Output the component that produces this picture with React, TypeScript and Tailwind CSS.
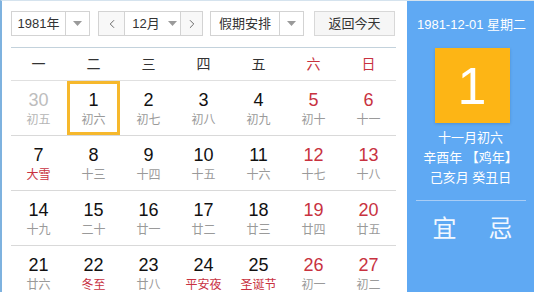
import React from 'react';
import { ChevronLeft, ChevronRight } from 'lucide-react';

type Day = { d: number; l: string; kind?: 'muted' | 'red'; fest?: boolean; sel?: boolean };

const weeks: Day[][] = [
  [
    { d: 30, l: '初五', kind: 'muted' },
    { d: 1, l: '初六', sel: true },
    { d: 2, l: '初七' },
    { d: 3, l: '初八' },
    { d: 4, l: '初九' },
    { d: 5, l: '初十', kind: 'red' },
    { d: 6, l: '十一', kind: 'red' },
  ],
  [
    { d: 7, l: '大雪', fest: true },
    { d: 8, l: '十三' },
    { d: 9, l: '十四' },
    { d: 10, l: '十五' },
    { d: 11, l: '十六' },
    { d: 12, l: '十七', kind: 'red' },
    { d: 13, l: '十八', kind: 'red' },
  ],
  [
    { d: 14, l: '十九' },
    { d: 15, l: '二十' },
    { d: 16, l: '廿一' },
    { d: 17, l: '廿二' },
    { d: 18, l: '廿三' },
    { d: 19, l: '廿四', kind: 'red' },
    { d: 20, l: '廿五', kind: 'red' },
  ],
  [
    { d: 21, l: '廿六' },
    { d: 22, l: '冬至', fest: true },
    { d: 23, l: '廿八' },
    { d: 24, l: '平安夜', fest: true },
    { d: 25, l: '圣诞节', fest: true },
    { d: 26, l: '初一', kind: 'red' },
    { d: 27, l: '初二', kind: 'red' },
  ],
];

const weekdays = ['一', '二', '三', '四', '五', '六', '日'];

const Caret = () => (
  <svg width="9" height="5" viewBox="0 0 9 5">
    <path d="M0 0h9L4.5 5z" fill="#9a9a9a" />
  </svg>
);

const DayCell = ({ day }: { day: Day }) => {
  const numColor =
    day.kind === 'muted' ? 'text-[#bdbdbd]' : day.kind === 'red' ? 'text-[#c8323f]' : 'text-[#111]';
  const lunarColor = day.fest ? 'text-[#c8323f]' : day.kind === 'muted' ? 'text-[#b5b5b5]' : 'text-[#9a9a9a]';
  return (
    <div
      className={`mx-px flex h-[54px] flex-col items-center border-[3px] pt-[5px] ${
        day.sel ? 'border-[#f6b82c]' : 'border-transparent'
      }`}
    >
      <span className={`text-[18px] leading-[22px] ${numColor}`}>{day.d}</span>
      <span className={`mt-px text-[12px] leading-[16px] ${lunarColor}`}>{day.l}</span>
    </div>
  );
};

export default function App() {
  return (
    <div className="flex h-[292px] w-[534px] overflow-hidden border-t border-l-2 border-t-[#d5e3ee] border-l-[#7eb2df] bg-white font-['Liberation_Sans','Noto_Sans_CJK_SC',sans-serif]">
      <div className="w-[405px] shrink-0 pt-[10px] pl-[9px]">
        <div className="flex h-[25px] text-[13px] text-[#333]">
          <div className="flex w-[79px] border border-[#d3d3d3]">
            <span className="flex w-[54px] items-center justify-center border-r border-[#d3d3d3]">1981年</span>
            <span className="flex flex-1 items-center justify-center">
              <Caret />
            </span>
          </div>
          <div className="ml-[8px] flex w-[105px] border border-[#d3d3d3]">
            <span className="flex w-[26px] items-center justify-center border-r border-[#d3d3d3] bg-[#f8f8f8]">
              <ChevronLeft size={14} strokeWidth={1.5} color="#555" />
            </span>
            <span className="flex w-[56px] items-center justify-center gap-[8px] border-r border-[#d3d3d3] pl-[4px]">
              12月
              <Caret />
            </span>
            <span className="flex flex-1 items-center justify-center bg-[#f8f8f8]">
              <ChevronRight size={14} strokeWidth={1.5} color="#555" />
            </span>
          </div>
          <div className="ml-[7px] flex w-[94px] border border-[#d3d3d3]">
            <span className="flex w-[69px] items-center justify-center border-r border-[#d3d3d3]">假期安排</span>
            <span className="flex flex-1 items-center justify-center">
              <Caret />
            </span>
          </div>
          <button className="ml-[10px] flex w-[81px] items-center justify-center border border-[#d8d8d8] bg-[#f6f6f6] text-[13px] text-[#333]">
            返回今天
          </button>
        </div>

        <div className="mt-[11px] w-[385px] border-t border-[#c3d2dc]">
          <div className="grid h-[33px] grid-cols-7 border-b border-[#e0e0e0] text-[14px]">
            {weekdays.map((w, i) => (
              <span
                key={w}
                className={`flex items-center justify-center ${i >= 5 ? 'text-[#c8323f]' : 'text-[#333]'}`}
              >
                {w}
              </span>
            ))}
          </div>
          {weeks.map((week, wi) => (
            <div key={wi} className="grid h-[55px] grid-cols-7 border-b border-[#d9d9d9]">
              {week.map((day) => (
                <DayCell key={`${wi}-${day.d}`} day={day} />
              ))}
            </div>
          ))}
        </div>
      </div>

      <div className="flex flex-1 flex-col items-center bg-[#5fa9f3] text-white">
        <div className="mt-[14px] ml-[2px] text-[13px] leading-[20px]">1981-12-01 星期二</div>
        <div className="mt-[13px] ml-[3px] flex h-[75px] w-[75px] items-center justify-center bg-[#fdb515] text-[52px] leading-none shadow-[0_1px_3px_rgba(0,0,0,0.15)]">
          1
        </div>
        <div className="mt-[5px] text-[13px] leading-[20px]">十一月初六</div>
        <div className="text-[13px] leading-[20px]">辛酉年 【鸡年】</div>
        <div className="text-[13px] leading-[20px]">己亥月 癸丑日</div>
        <div className="mt-[12px] w-[110px] border-t border-[#a9cdf5]" />
        <div className="mt-[14px] ml-[4px] flex w-[80px] justify-between text-[24px] leading-[28px] text-[#f2f8ff]">
          <span>宜</span>
          <span>忌</span>
        </div>
      </div>
    </div>
  );
}
